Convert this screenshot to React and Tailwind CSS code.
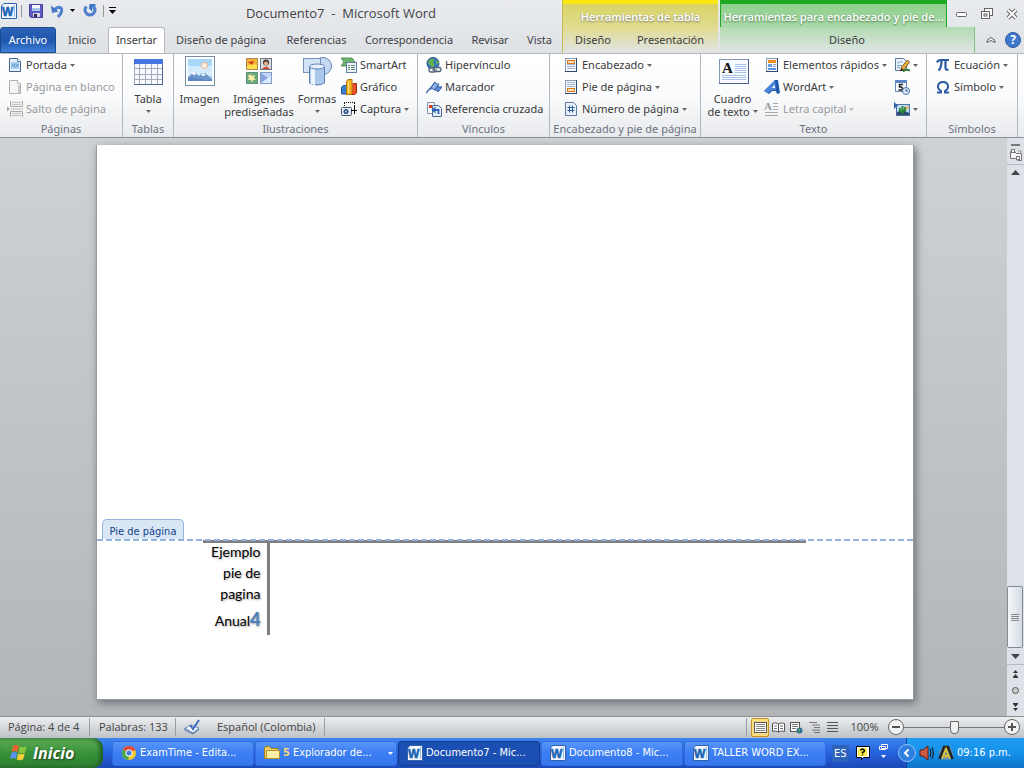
import React, { useState } from 'react'

const Caret = ({ className = 'fill-[#666]' }) => (
    <svg width="5" height="3" viewBox="0 0 5 3" className={`shrink-0 ${className}`}>
        <path d="M0 0h5L2.5 3z" />
    </svg>
)

const Icon = ({ size = 16, children, className = '' }) => (
    <svg width={size} height={size} viewBox={`0 0 ${size} ${size}`} className={`shrink-0 ${className}`} aria-hidden="true">
        {children}
    </svg>
)

const WordIcon = () => (
    <Icon>
        <path d="M3 .5h12.5v15H.5V3z" fill="#f3f8fe" stroke="#2f62a8" />
        <path d="M13.500 2v12" stroke="#9dbde6" />
        <text x="1" y="12.5" fontSize="12" fontWeight="bold" fontFamily="Liberation Sans, sans-serif" fill="#1d66b5" stroke="#1d66b5" strokeWidth=".6">W</text>
    </Icon>
)

const SaveIcon = () => (
    <Icon>
        <path d="M1.5 1.5h13v13H3l-1.5-1.5z" fill="#5d5abf" stroke="#45429c" />
        <path d="M4 2h8v6H4z" fill="#f4f7fd" />
        <path d="M4 5h8v3H4z" fill="#a5c4ee" />
        <path d="M5 10h7v4H5z" fill="#d3d6e0" />
        <path d="M6 11h3v3H6z" fill="#2c2a50" />
    </Icon>
)

const UndoIcon = () => (
    <Icon>
        <path d="M4.5 6.5Q8 3 11 5q2.500 3-3 9" fill="none" stroke="#4f80cd" strokeWidth="3" />
        <path d="M1 2.500l1 7.500 6.500-1.500z" fill="#4577c7" />
    </Icon>
)

const RedoIcon = () => (
    <Icon>
        <path d="M4.500 3.500Q1.500 7 4.500 10.500q3.500 3 7 0 3-4 0-6.500" fill="none" stroke="#4f80cd" strokeWidth="3" />
        <path d="M7.500 1h6v2l-3 1.500-.5 4-3-3z" fill="#3f73c6" />
    </Icon>
)

const Sheet = ({ fill = '#f4f8fd', stroke = '#5b7699' }) => (
    <path d="M2.5 1.5h8l3 3v10h-11z" fill={fill} stroke={stroke} />
)

const CoverIcon = () => (
    <Icon>
        <Sheet fill="#e6f1fb" stroke="#3f648f" />
        <rect x="4" y="5" width="8" height="7" fill="#a5cdf0" />
        <path d="M10.5 1.5v3h3" fill="#fff" stroke="#3f648f" strokeWidth=".8" />
        <path d="M4.500 7l2 1.500 2-1.500 2 1.500L12 7M4.500 10l2-1.500 2 1.500 2-1.500L12 10" fill="none" stroke="#4e8bc9" strokeWidth=".8" />
    </Icon>
)

const BlankIcon = () => (
    <Icon>
        <Sheet fill="#f5f5f5" stroke="#b0b0b0" />
        <path d="M10.5 1.5v3h3" fill="#fff" stroke="#a8a8a8" strokeWidth=".8" />
        <path d="M12 6v8" stroke="#ccc" strokeWidth="2" />
    </Icon>
)

const BreakIcon = () => (
    <Icon>
        <path d="M0 5.500L3 8 0 10.500z" fill="#aaa" />
        <path d="M3.5 0v5.5h12V0M3.5 16v-5.5h12V16" fill="#efefef" stroke="#aaa" />
        <path d="M5 1.500h9M5 3.500h9M5 12.500h9M5 14.500h9" stroke="#c4c4c4" />
        <path d="M4 8h12" stroke="#bbb" />
    </Icon>
)

const TableIcon = () => (
    <Icon size={32}>
        <rect x="2" y="3" width="29" height="26" fill="#f7f9fc" />
        <rect x="2" y="3" width="29" height="5" fill="#4575dd" />
        <path d="M2.5 8v20M7.5 8v20M13.5 8v20M19.5 8v20M25.500 8v20M30.5 8v20M2 12.500h29M2 18.500h29M2 23.500h29M2 28.500h29" stroke="#a3adbf" />
        <path d="M2 28.500h29M30.500 8v20" stroke="#4f6995" />
    </Icon>
)

const PictureIcon = () => (
    <Icon size={32}>
        <rect x="1.5" y=".5" width="29" height="29" fill="#fdfeff" stroke="#7b8da2" />
        <rect x="4" y="3" width="24" height="21" fill="#a9d7fb" />
        <path d="M4 10h24v10H4z" fill="#d3ecfd" />
        <circle cx="20.5" cy="9.5" r="3" fill="#fdf3ea" stroke="#f2a878" />
        <path d="M4 22l6-7 5 5 3-3 3 0 7 6H4z" fill="#6b95cb" />
        <path d="M7 18l3-3 3 4-2-1-1 2-1-2zM17 19l2-2 3 2-3 1z" fill="#fff" />
        <path d="M4 21q12 3 24 2v2H4z" fill="#5c86c4" />
    </Icon>
)

const ClipArtIcon = () => (
    <Icon size={32}>
        <rect x="3.5" y="2.5" width="11" height="11" fill="#f9b233" stroke="#a98a50" />
        <path d="M4 10l5-2 5 1v4H4z" fill="#ffdf4a" />
        <path d="M5 6l6-1-2 4z" fill="#c53a1c" />
        <rect x="17.5" y="2.5" width="11" height="11" fill="#d9dce3" stroke="#6c7480" />
        <circle cx="23" cy="6.500" r="3" fill="#4a352b" />
        <circle cx="23" cy="7.500" r="2" fill="#e8b68e" />
        <path d="M19 13q4-5 8 0z" fill="#d5492c" />
        <rect x="3.5" y="16.5" width="11" height="11" fill="#6dab79" stroke="#5f8f80" />
        <path d="M5 19l2 0 1-1 1 2 3-1-1 3 2 2-3 0-1 3-1-3-3 0 1-2z" fill="#f5eca5" />
        <rect x="17.5" y="16.5" width="11" height="11" fill="#c3d9f6" stroke="#7f9cc8" />
        <path d="M18 17l7 5-7 5z" fill="#8ba4dd" />
        <path d="M18 27l10-7v7z" fill="#dbe9fb" />
    </Icon>
)

const ShapesIcon = () => (
    <Icon size={32}>
        <circle cx="22" cy="10" r="8.5" fill="#c5d9f2" stroke="#6887b5" />
        <rect x="2.5" y="2.5" width="17" height="14" fill="#d3e4f7" stroke="#7491bb" />
        <path d="M8.5 11v16q7.500 4 15 0V11z" fill="#abc7ec" stroke="#5f80b3" />
        <path d="M11 12v16M13 12v17" stroke="#edf5ff" strokeWidth="2" />
        <ellipse cx="16" cy="10.5" rx="7.500" ry="2.5" fill="#e9f2fc" stroke="#5f80b3" />
    </Icon>
)

const SmartArtIcon = () => (
    <Icon>
        <path d="M0 1h11l3 4-3 4H0l3-4z" fill="#6fb269" stroke="#3f8644" strokeWidth=".8" />
        <rect x="5.5" y="5.5" width="10" height="10" fill="#eef3fa" stroke="#627ea7" />
        <path d="M7 8.500h2M10 8.500h4M7 10.500h2M10 10.500h4M7 12.500h2M10 12.500h4" stroke="#5f8a6c" />
    </Icon>
)

const ChartIcon = () => (
    <Icon>
        <path d="M.5 8l2-1.500h3V15h-5z" fill="#3a7fd0" stroke="#1d579f" />
        <path d="M10.5 6L12 4.500h3.500V14l-2 1.500h-3z" fill="#f0512b" stroke="#a12a12" />
        <path d="M5.5 2.500L7 .5h4v14l-1 1H5.500z" fill="#f7b526" stroke="#b07708" />
        <path d="M7.500 3v11" stroke="#ffe07a" />
    </Icon>
)

const CameraIcon = () => (
    <Icon>
        <path d="M3 1.5h11M3.500 2v4M13.500 2v3" stroke="#111" strokeDasharray="1 1" fill="none" />
        <rect x=".5" y="6.500" width="10" height="8" rx="1" fill="#e3ebf5" stroke="#47566b" />
        <circle cx="5" cy="10.500" r="2.5" fill="#2e4f7b" />
        <circle cx="5" cy="10.500" r="1" fill="#b4d0f1" />
        <path d="M13.500 5v8M10 9.500h6" stroke="#000" />
    </Icon>
)

const LinkIcon = () => (
    <Icon>
        <circle cx="7" cy="6.5" r="6" fill="#3474c9" stroke="#26528c" />
        <path d="M3 3q4-3 6 0l-2 2 2 3-3 3-2-3-2-1z" fill="#63b04c" />
        <path d="M10 3l3 2-1 3-2-2z" fill="#63b04c" />
        <rect x="3" y="11" width="7" height="4" rx="2" fill="#f2f4f8" stroke="#546377" strokeWidth="1.3" />
        <rect x="8" y="10.5" width="7" height="4" rx="2" fill="#f2f4f8" stroke="#546377" strokeWidth="1.3" />
        <path d="M6 13h5" stroke="#546377" />
    </Icon>
)

const BookmarkIcon = () => (
    <Icon>
        <path d="M0 14L9 4" stroke="#4069ad" strokeWidth="1.5" />
        <path d="M4 10l5-7q1 3 4 2l-4 6q-3-2-5-1z" fill="#8db1e6" stroke="#315da6" />
        <path d="M9 11l3-4q1 1 4 1l-4 5q-1-2-3-2z" fill="#5f8fd6" stroke="#315da6" />
    </Icon>
)

const CrossRefIcon = () => (
    <Icon>
        <path d="M1.5 1.5h7v11h-7z" fill="#fff" stroke="#8295b0" />
        <path d="M3 4h3v3H3z" fill="#e0391c" />
        <path d="M6.500 4.500h6l3 3v8h-9z" fill="#e5effa" stroke="#4a6890" />
        <path d="M12.500 13V9H8" fill="none" stroke="#2b62b3" strokeWidth="1.8" />
        <path d="M5.500 9L9.500 5.500v7z" fill="#2b62b3" />
    </Icon>
)

const PageBand = ({ y }) => (
    <Icon>
        <rect x="2.500" y="1.5" width="11" height="13" fill="#f6f9fd" stroke="#8d9cb3" />
        <path d="M2 14.500h12M13.500 1v14" stroke="#2f4a70" />
        <path d="M4 3.500h8M4 5.500h8M4 7.500h8M4 9.500h8M4 11.500h8" stroke="#9db2d0" />
        <rect x="4.500" y={y} width="7" height="3" fill="#fde0b0" stroke="#d9781a" />
    </Icon>
)

const PageNumberIcon = () => (
    <Icon>
        <Sheet fill="#eaf2fb" stroke="#5d779c" />
        <path d="M6.500 4.500v7M9.500 4.500v7M4.500 6.500h7M4.500 9.500h7" stroke="#30599c" />
    </Icon>
)

const TextBoxIcon = () => (
    <Icon size={32}>
        <rect x="2.5" y="3.500" width="29" height="24" fill="#f7fafe" stroke="#8297b8" />
        <path d="M2 27.500h30M31.500 3v25" stroke="#46618c" />
        <path d="M18 8.500h11M18 10.500h11M18 12.500h11M18 14.500h11M18 16.500h11M5 19.500h24M5 21.500h24M5 23.500h24" stroke="#a9c2ea" />
        <text x="5" y="17" fontSize="15" fontWeight="bold" fontFamily="Liberation Serif, serif" fill="#111">A</text>
    </Icon>
)

const QuickPartsIcon = () => (
    <Icon>
        <rect x="2.500" y="1.5" width="11" height="13" fill="#f6f9fd" stroke="#8d9cb3" />
        <path d="M2 14.500h12M13.500 1v14" stroke="#2f4a70" />
        <rect x="4" y="3" width="8" height="3" fill="#f08a24" />
        <rect x="4" y="7" width="4" height="3" fill="#6ba1df" />
        <path d="M9 7.500h3M9 9.500h3" stroke="#8fa5c4" />
        <rect x="4" y="11" width="8" height="2" fill="#5a91d6" />
    </Icon>
)

const WordArtIcon = () => (
    <Icon>
        <path d="M0 12L11 1h3l2 13-3 1-1-3H8l-3 3z" fill="#1e56ad" />
        <path d="M0 12L11 1l1 10H8l-4 3z" fill="#4a86d8" />
        <path d="M8 9l2.500-3.500L11 9z" fill="#fff" />
    </Icon>
)

const DropCapIcon = () => (
    <Icon>
        <text x="0" y="9" fontSize="11" fontWeight="bold" fontFamily="Liberation Serif, serif" fill="#999">A</text>
        <path d="M9 2.500h5M9 5.500h5M9 8.500h5M1 11.500h13M1 14.500h13" stroke="#aaa" />
    </Icon>
)

const SignatureIcon = () => (
    <Icon>
        <path d="M1.5 1.5h8l3 3v9h-11z" fill="#eaf2fb" stroke="#5c7596" />
        <path d="M3 5q2 2 3 0t3 1M3 8.500h5M3 10.500h3" stroke="#78a0cf" fill="none" />
        <path d="M15.500 5l-2-2-6 7-1 4 4-2z" fill="#f0ad38" stroke="#5d4517" strokeWidth=".8" />
        <path d="M6.500 14l1-3 2 2z" fill="#222" />
        <path d="M9 14.500q3-3 7-1" stroke="#2f7a2e" strokeWidth="2" fill="none" />
    </Icon>
)

const DateIcon = () => (
    <Icon>
        <path d="M1.5 2.500h11v10h-11z" fill="#f6f9fd" stroke="#6b8bb8" />
        <path d="M1 1h12v3H1z" fill="#5b85c4" />
        <path d="M9 5.500H5.500v2.500h2q2 1.500 0 3H4.500" fill="none" stroke="#222" strokeWidth="1.500" />
        <circle cx="12" cy="12" r="3.5" fill="#dceafa" stroke="#5073a4" />
        <path d="M12 10v2h2" fill="none" stroke="#395782" />
    </Icon>
)

const ObjectIcon = () => (
    <Icon>
        <rect x="2.500" y="3.5" width="13" height="11" fill="#b9daf7" stroke="#50709d" />
        <path d="M3 11q6-3 12 1v2H3z" fill="#2d4a70" />
        <path d="M0 1l4 3.500L0 8z" fill="#2e64ad" />
        <path d="M8.500 13V5M6 7v3h2.500M11 6v3.500H8.500" stroke="#2b8a35" strokeWidth="2" fill="none" />
        <circle cx="13" cy="6.500" r="1.5" fill="#f2a94d" />
    </Icon>
)

const PiIcon = () => (
    <Icon>
        <path d="M2 5.500Q3 3 5.500 3H14M6.500 3.500Q6.500 11 3.500 13.500M10.500 3.500v7q0 3 3 2" fill="none" stroke="#2b5ba3" strokeWidth="2.200" />
    </Icon>
)

const OmegaIcon = () => (
    <Icon>
        <path d="M2 13.500h4V12Q2.500 10 3 6.500 4 3 8 3t5 3.500Q13.500 10 10 12v1.500h4" fill="none" stroke="#2b5ba3" strokeWidth="2" />
    </Icon>
)

const ChromeIcon = () => (
    <Icon>
        <circle cx="8" cy="8" r="7" fill="#f4ca32" />
        <path d="M8 8L1.900 4.500A7 7 0 0 1 14.300 5z" fill="#e04a3a" />
        <path d="M8 8L1.900 4.500A7 7 0 0 0 7.500 15z" fill="#4aa94f" />
        <circle cx="8" cy="8" r="3.500" fill="#fff" />
        <circle cx="8" cy="8" r="2.500" fill="#3f7fd8" />
    </Icon>
)

const FolderIcon = () => (
    <Icon>
        <path d="M.5 3.500l1-2h4l1.500 2h7v10H.5z" fill="#f3cf5e" stroke="#a1801f" />
        <path d="M2.5 5.500h13v8h-13z" fill="#fdf0a4" stroke="#b3902a" />
    </Icon>
)

const WindowsFlag = () => (
    <Icon size={20}>
        <path d="M4 3q3-2 6 0L8.500 9q-3-2-6 0z" fill="#ea6434" />
        <path d="M11 3.500q3 1.500 6.500 0L16 9.500q-3 1.500-6.500 0z" fill="#8cc63e" />
        <path d="M2.300 10q3-2 6 0L7 16q-3-2-6 0z" fill="#5b93ec" />
        <path d="M9.300 10.500q3 1.500 6.500 0L14 16.500q-3 1.500-6.300 0z" fill="#f7cf3c" />
    </Icon>
)

const SmallButton = ({ icon, label, name, caret, disabled }) => (
    <button
        disabled={disabled}
        aria-label={name}
        className={`flex h-[22px] items-center gap-[3px] whitespace-nowrap ${disabled ? 'text-[#9a9a9a]' : 'text-[#3b3b3b]'}`}
    >
        {icon}
        {label && <span>{label}</span>}
        {caret && <Caret className={disabled ? 'fill-[#bbb]' : 'fill-[#666]'} />}
    </button>
)

const BigButton = ({ icon, lines, className, caret, inlineCaret }) => (
    <button className={`flex flex-col items-center pt-[2px] leading-[13px] whitespace-nowrap text-[#3b3b3b] ${className}`}>
        {icon}
        <span className="mt-[4px] block">{lines[0]}</span>
        {lines[1] && (
            <span className="flex items-center gap-[3px]">
                {lines[1]}
                {inlineCaret && <Caret />}
            </span>
        )}
        {caret && <Caret className="mt-[5px] fill-[#666]" />}
    </button>
)

const Group = ({ title, className, children }) => (
    <section className={`flex shrink-0 flex-col border-r border-[#b4b8be] ${className}`}>
        <div className="flex h-[66px]">{children}</div>
        <h2 className="h-[17px] text-center leading-[17px] whitespace-nowrap text-[#6c7280]">{title}</h2>
    </section>
)

const TABS = [
    { label: 'Inicio', width: 'w-[52px]' },
    { label: 'Insertar', width: 'w-[57px]' },
    { label: 'Diseño de página', width: 'w-[112px]' },
    { label: 'Referencias', width: 'w-[79px]' },
    { label: 'Correspondencia', width: 'w-[106px]' },
    { label: 'Revisar', width: 'w-[56px]' },
    { label: 'Vista', width: 'w-[43px]' }
]

const TASKS = [
    { label: 'ExamTime - Edita...', icon: <ChromeIcon /> },
    { label: 'Explorador de...', icon: <FolderIcon />, count: 5 },
    { label: 'Documento7 - Mic...', icon: <WordIcon />, active: true },
    { label: 'Documento8 - Mic...', icon: <WordIcon /> },
    { label: 'TALLER WORD EX...', icon: <WordIcon /> }
]

const Header = ({ tab, setTab }) => (
    <header className="flex h-[54px] border-b border-[#b5b9be] bg-linear-to-b from-[#e9ebee] to-[#dfe2e5]">
        <div className="flex flex-1 flex-col">
            <div className="flex h-[28px] items-center">
                <div className="flex w-[120px] items-center pb-[6px] pl-px">
                    <WordIcon />
                    <span className="mx-1 h-3 w-px bg-[#999]" />
                    <button aria-label="Guardar" className="ml-[2px]"><SaveIcon /></button>
                    <button aria-label="Deshacer" className="ml-[6px] flex items-center gap-[4px]">
                        <UndoIcon />
                        <Caret className="fill-black" />
                    </button>
                    <button aria-label="Rehacer" className="ml-[7px]"><RedoIcon /></button>
                    <span className="mx-[5px] h-3 w-px shrink-0 bg-[#999]" />
                    <button aria-label="Personalizar barra" className="shrink-0">
                        <svg width="7" height="7" viewBox="0 0 7 7"><path d="M0 0h7v1H0zM0 3h7L3.500 7z" /></svg>
                    </button>
                </div>
                <h1 className="flex-1 font-['Open_Sans',sans-serif] text-center text-[13px] whitespace-pre text-[#444]">Documento7  -  Microsoft Word</h1>
            </div>
            <nav className="flex h-[26px] items-stretch">
                <button className="w-[56px] rounded-t-[3px] border border-[#1c4a93] bg-linear-to-b from-[#2b62b8] via-[#1f55ab] to-[#3e7fd6] text-white">
                    Archivo
                </button>
                {TABS.map((t) => (
                    <button
                        key={t.label}
                        onClick={() => setTab(t.label)}
                        className={`${t.width} whitespace-nowrap ${
                            tab === t.label
                                ? 'rounded-t-[3px] border border-b-0 border-[#b5b9be] bg-white'
                                : 'text-[#3f4045]'
                        }`}
                    >
                        {t.label}
                    </button>
                ))}
            </nav>
        </div>

        {/* Table tools */}
        <div className="flex w-[156px] flex-col border-l border-[#c9b94a] bg-linear-to-b from-[#d8d15c] via-[#e0db8c] to-[#e1e4e6]">
            <div className="h-[28px] border-t-4 border-[#fbe712] pt-[5px] text-center font-['Open_Sans',sans-serif] font-semibold text-white [text-shadow:0_1px_2px_#777]">
                Herramientas de tabla
            </div>
            <div className="flex h-[25px]">
                <button className="w-[60px]">Diseño</button>
                <button className="flex-1">Presentación</button>
            </div>
        </div>

        {/* Header and footer tools */}
        <div className="ml-[2px] flex w-[304px] flex-col">
            <div className="flex h-[27px]">
                <div className="w-[227px] border-t-4 border-r border-l border-[#1fa824] bg-linear-to-b from-[#8fd08d] to-[#a9d8a8] pt-[5px] text-center font-['Open_Sans',sans-serif] font-semibold whitespace-nowrap text-white [text-shadow:0_1px_2px_#4c7a4c]">
                    Herramientas para encabezado y pie de...
                </div>
                <div className="flex flex-1 items-center justify-between pr-[6px] pl-[9px]">
                    <button aria-label="Minimizar">
                        <Icon size={12}><rect x=".5" y="4.500" width="10" height="4" rx="1" fill="#fff" stroke="#666" /></Icon>
                    </button>
                    <button aria-label="Restaurar">
                        <Icon size={12}>
                            <rect x="3.5" y=".5" width="8" height="7" fill="#fff" stroke="#666" />
                            <rect x=".5" y="3.500" width="8" height="7" fill="#fff" stroke="#666" />
                            <rect x="3" y="6" width="3" height="2" fill="#fff" stroke="#666" />
                        </Icon>
                    </button>
                    <button aria-label="Cerrar">
                        <Icon size={12}>
                            <path d="M2 2l8 8M10 2l-8 8" stroke="#666" strokeWidth="4" />
                            <path d="M2 2l8 8M10 2l-8 8" stroke="#fff" strokeWidth="2" />
                        </Icon>
                    </button>
                </div>
            </div>
            <div className="flex h-[26px]">
                <button className="w-[255px] border-r border-[#7cc47c] bg-linear-to-b from-[#b2dbb2] to-[#e1e4e6]">Diseño</button>
                <div className="flex flex-1 items-center justify-end gap-[9px] pr-[3px]">
                    <button aria-label="Contraer cinta">
                        <Icon size={10}><path d="M1 7.500V5.500l4-3 4 3v2l-4-2z" fill="#fff" stroke="#555" /></Icon>
                    </button>
                    <button aria-label="Ayuda" className="size-4 rounded-full border border-[#2c5aa5] bg-[#3f78cd] text-[12px] leading-[14px] font-bold text-white">
                        ?
                    </button>
                </div>
            </div>
        </div>
    </header>
)

const Ribbon = () => (
    <div className="flex h-[84px] border-b border-[#8c9096] bg-linear-to-b from-white via-[#fafbfc] to-[#e8eaed]">
        <Group title="Páginas" className="w-[123px]">
            <div className="pl-[7px]">
                <SmallButton icon={<CoverIcon />} label="Portada" caret />
                <SmallButton icon={<BlankIcon />} label="Página en blanco" disabled />
                <SmallButton icon={<BreakIcon />} label="Salto de página" disabled />
            </div>
        </Group>
        <Group title="Tablas" className="w-[51px]">
            <BigButton icon={<TableIcon />} lines={['Tabla']} caret className="w-full" />
        </Group>
        <Group title="Ilustraciones" className="w-[244px]">
            <BigButton icon={<PictureIcon />} lines={['Imagen']} className="w-[51px]" />
            <BigButton icon={<ClipArtIcon />} lines={['Imágenes', 'prediseñadas']} className="w-[68px]" />
            <BigButton icon={<ShapesIcon />} lines={['Formas']} caret className="w-[48px]" />
            <div>
                <SmallButton icon={<SmartArtIcon />} label="SmartArt" />
                <SmallButton icon={<ChartIcon />} label="Gráfico" />
                <SmallButton icon={<CameraIcon />} label="Captura" caret />
            </div>
        </Group>
        <Group title="Vínculos" className="w-[132px]">
            <div className="pl-[8px]">
                <SmallButton icon={<LinkIcon />} label="Hipervínculo" />
                <SmallButton icon={<BookmarkIcon />} label="Marcador" />
                <SmallButton icon={<CrossRefIcon />} label="Referencia cruzada" />
            </div>
        </Group>
        <Group title="Encabezado y pie de página" className="w-[151px]">
            <div className="pl-[13px]">
                <SmallButton icon={<PageBand y={3.5} />} label="Encabezado" caret />
                <SmallButton icon={<PageBand y={9.5} />} label="Pie de página" caret />
                <SmallButton icon={<PageNumberIcon />} label="Número de página" caret />
            </div>
        </Group>
        <Group title="Texto" className="w-[226px]">
            <BigButton icon={<TextBoxIcon />} lines={['Cuadro', 'de texto']} inlineCaret className="w-[63px]" />
            <div className="w-[130px]">
                <SmallButton icon={<QuickPartsIcon />} label="Elementos rápidos" caret />
                <SmallButton icon={<WordArtIcon />} label="WordArt" caret />
                <SmallButton icon={<DropCapIcon />} label="Letra capital" caret disabled />
            </div>
            <div>
                <SmallButton icon={<SignatureIcon />} name="Línea de firma" caret />
                <SmallButton icon={<DateIcon />} name="Fecha y hora" />
                <SmallButton icon={<ObjectIcon />} name="Objeto" caret />
            </div>
        </Group>
        <Group title="Símbolos" className="w-[91px]">
            <div className="pl-[8px]">
                <SmallButton icon={<PiIcon />} label="Ecuación" caret />
                <SmallButton icon={<OmegaIcon />} label="Símbolo" caret />
            </div>
        </Group>
    </div>
)

const ScrollBar = () => (
    <div className="flex w-[17px] flex-col items-center bg-[#dde1e8] pt-[6px]">
        <span className="h-[2px] w-[9px] bg-[#777]" />
        <button aria-label="Regla" className="mt-[3px]">
            <Icon size={12}>
                <path d="M.5 2.500h4l2 2h5v7h-4l-2-2h-5z" fill="#f5f5f5" stroke="#777" />
                <rect x="1.5" y=".5" width="3" height="3" fill="#fff" stroke="#777" />
                <rect x="6.5" y="7.500" width="3" height="3" fill="#fff" stroke="#777" />
                <path d="M8 2l3 0 0 2" fill="none" stroke="#999" />
            </Icon>
        </button>
        <span className="mt-[3px] h-px w-full bg-[#b5bac2]" />
        <button aria-label="Subir" className="mt-[5px]">
            <svg width="9" height="5" viewBox="0 0 9 5"><path d="M0 5h9L4.500 0z" fill="#444" /></svg>
        </button>
        <div className="flex w-full flex-1 flex-col justify-end">
            <div className="flex h-[62px] w-[16px] flex-col items-center justify-center gap-px rounded-[2px] border border-[#838b97] bg-linear-to-r from-[#f4f6f9] to-[#d5dbe5]">
                <span className="h-px w-2 bg-[#888]" />
                <span className="h-px w-2 bg-[#888]" />
                <span className="h-px w-2 bg-[#888]" />
                <span className="h-px w-2 bg-[#888]" />
            </div>
        </div>
        <button aria-label="Bajar" className="mt-[6px]">
            <svg width="9" height="5" viewBox="0 0 9 5"><path d="M0 0h9L4.500 5z" fill="#444" /></svg>
        </button>
        <span className="mt-[5px] h-px w-full bg-[#b5bac2]" />
        <div className="flex h-[51px] flex-col items-center justify-around">
            <button aria-label="Página anterior">
                <svg width="7" height="8" viewBox="0 0 7 8"><path d="M1 3h5L3.500 0zM1 7h5L3.500 4zM1 7h5v1H1z" fill="#333" /></svg>
            </button>
            <button aria-label="Seleccionar objeto" className="size-[7px] rounded-full border border-[#555] bg-[#ccc]" />
            <button aria-label="Página siguiente">
                <svg width="7" height="8" viewBox="0 0 7 8"><path d="M1 0h5v1H1zM1 1h5L3.500 4zM1 5h5L3.500 8z" fill="#333" /></svg>
            </button>
        </div>
    </div>
)

const DocumentArea = () => (
    <main className="flex flex-1 bg-linear-to-b from-[#ced2d6] to-[#b2b6b9]">
        <div className="flex flex-1 pt-[7px] pb-[16px] pl-[3px]">
            <article className="mx-auto flex w-[818px] flex-col justify-end border border-t-0 border-[#989ca1] bg-white shadow-[2px_3px_8px_#6b6f74]">
                <div className="pl-[5px]">
                    <span className="block h-[20px] w-[82px] rounded-t-[5px] border border-b-0 border-[#93b3dc] bg-[#d9e7f5] text-center font-['DejaVu_Sans_Condensed',sans-serif] text-[11px] leading-[23px] text-[#15428b]">
                        Pie de página
                    </span>
                </div>
                <footer className="h-[160px]">
                    <div className="relative z-10 h-[2px] bg-[repeating-linear-gradient(90deg,#93b3dc_0_6px,transparent_6px_9px)]" />
                    <table className="-mt-px ml-[106px] w-[603px] border-collapse border-t-3 border-[#7f7f7f] font-[Lato,sans-serif] text-[14px] leading-[21px] text-black">
                        <tbody>
                            <tr>
                                <td className="w-[65px] border-r-3 border-[#7f7f7f] pr-[6px] pb-[4px] text-right align-top [text-shadow:1px_1px_2px_#aaa]">
                                    <p className="-mt-[2px]">Ejemplo pie de pagina</p>
                                    <p className="mt-[5px]">
                                        Anual<span className="text-[18px] font-black text-[#4f81bd]">4</span>
                                    </p>
                                </td>
                                <td />
                            </tr>
                        </tbody>
                    </table>
                </footer>
            </article>
        </div>
        <ScrollBar />
    </main>
)

const ViewIcon = ({ kind }) => (
    <Icon size={13}>
        {kind === 'print' && <><rect x=".5" y="1.5" width="12" height="10" fill="#fff" stroke="#555" /><path d="M2 3.500h9M2 5.500h9M2 7.500h9M2 9.500h9" stroke="#888" /></>}
        {kind === 'read' && <><path d="M6.500 3q-3-2-6-.5v8q3-1.500 6 .5 3-2 6-.5v-8q-3-1.500-6 .5v8" fill="#fff" stroke="#555" /><path d="M2 5h3M2 7.500h3M8 5h3M8 7.500h3" stroke="#777" /></>}
        {kind === 'web' && <><rect x=".5" y="1.5" width="9" height="9" fill="#fff" stroke="#555" /><path d="M2 3.500h6M2 5.500h6M2 7.500h4" stroke="#777" /><circle cx="9.5" cy="9.500" r="3" fill="#2f6f96" /><path d="M8 8l2 0 0 2-1 1z" fill="#68ad5a" /></>}
        {kind === 'outline' && <path d="M1 1.500h8M4 4h8M6 6.500h6M4 9h8M6 11.500h6" stroke="#777" />}
        {kind === 'draft' && <path d="M1 1.500h11M1 4.500h11M1 7.500h11M1 10.500h11" stroke="#555" />}
    </Icon>
)

const VIEWS = [
    { kind: 'print', label: 'Diseño de impresión' },
    { kind: 'read', label: 'Lectura de pantalla completa' },
    { kind: 'web', label: 'Diseño web' },
    { kind: 'outline', label: 'Esquema' },
    { kind: 'draft', label: 'Borrador' }
]

const StatusBar = ({ zoom, setZoom }) => (
    <div className="flex h-[22px] items-center border-t border-[#8c9096] bg-linear-to-b from-[#eceef0] to-[#bfc2c6] pb-px font-['Open_Sans',sans-serif] text-[#444]">
        <span className="w-[90px] border-r border-[#9a9da2] pl-[8px] leading-[18px] whitespace-nowrap">Página: 4 de 4</span>
        <span className="w-[86px] border-r border-[#9a9da2] pl-[9px] leading-[18px] whitespace-nowrap">Palabras: 133</span>
        <button aria-label="Revisión" className="ml-[8px]">
            <Icon>
                <path d="M1 9l6-3 8 3-6 5z" fill="#f4f8fd" stroke="#6f8fc4" />
                <path d="M1 9v2l8 4 6-5" fill="none" stroke="#4a6ea8" />
                <path d="M6 6l3 4 6-9" fill="none" stroke="#3c6bc0" strokeWidth="2" />
            </Icon>
        </button>
        <span className="ml-[17px] border-r border-[#9a9da2] pr-[9px] leading-[18px] whitespace-nowrap">Español (Colombia)</span>
        <div className="ml-auto flex items-center border-l border-[#9a9da2] pl-[4px]">
            {VIEWS.map((v, i) => (
                <button
                    key={v.kind}
                    aria-label={v.label}
                    className={`flex h-[19px] w-[18px] items-center justify-center ${i === 0 ? 'rounded-[2px] border border-[#c69223] bg-[#fbdc83]' : ''}`}
                >
                    <ViewIcon kind={v.kind} />
                </button>
            ))}
        </div>
        <span className="w-[47px] text-center">{zoom}%</span>
        <button aria-label="Alejar" className="flex size-[16px] items-center justify-center rounded-full border border-[#666] bg-[#f2f3f4]">
            <span className="h-[2px] w-[8px] bg-[#555]" />
        </button>
        <input
            type="range"
            aria-label="Zoom"
            min="0"
            max="200"
            value={zoom}
            onChange={(e) => setZoom(Number(e.target.value))}
            className="h-[15px] w-[100px] appearance-none bg-[linear-gradient(#777,#777)] bg-[length:100%_1px] bg-center bg-no-repeat [&::-webkit-slider-thumb]:h-[13px] [&::-webkit-slider-thumb]:w-[9px] [&::-webkit-slider-thumb]:appearance-none [&::-webkit-slider-thumb]:rounded-b-[4px] [&::-webkit-slider-thumb]:border [&::-webkit-slider-thumb]:border-[#666] [&::-webkit-slider-thumb]:bg-[#eef0f2]"
        />
        <button aria-label="Acercar" className="mr-[4px] flex size-[16px] items-center justify-center rounded-full border border-[#666] bg-[#f2f3f4]">
            <svg width="8" height="8" viewBox="0 0 8 8"><path d="M4 0v8M0 4h8" stroke="#555" strokeWidth="2" /></svg>
        </button>
    </div>
)

const TaskBar = () => (
    <div className="flex h-[30px] bg-linear-to-b from-[#3d86ee] via-[#2661dd] to-[#1c49b8] font-['DejaVu_Sans_Condensed',sans-serif] text-[11px] text-white">
        <button className="flex w-[103px] items-center gap-[4px] rounded-r-[10px] bg-linear-to-b from-[#5eac56] via-[#37933a] to-[#2c7d2f] pl-[9px] font-['Open_Sans',sans-serif] text-[16px] font-bold italic shadow-[inset_-3px_0_4px_#1f5c23] [text-shadow:1px_1px_2px_#1a3d1a]">
            <WindowsFlag />
            Inicio
        </button>
        <div className="ml-[9px] flex flex-1 items-center gap-px">
            {TASKS.map((t) => (
                <button
                    key={t.label}
                    className={`flex h-[25px] max-w-[142px] flex-1 items-center gap-[3px] rounded-[3px] border pl-[8px] whitespace-nowrap ${
                        t.active
                            ? 'border-[#143c8e] bg-[#1c4fb3]'
                            : 'border-[#2f6ce0] bg-linear-to-b from-[#5795f8] via-[#3b7df2] to-[#3777ec]'
                    }`}
                >
                    {t.icon}
                    {t.count && <b className="text-[#ffd779]">{t.count}</b>}
                    <span>{t.label}</span>
                    {t.count && <Caret className="mr-[3px] ml-auto fill-white" />}
                </button>
            ))}
        </div>
        <div className="flex w-[74px] items-center gap-[7px]">
            <span className="bg-[#2f62bd] px-[2px] leading-[17px]">ES</span>
            <Icon size={14}>
                <path d="M.5.5h13v11h-6l-2 2v-2h-5z" fill="#fff" stroke="#000" />
                <rect x="2" y="2" width="9" height="8" fill="#ffec47" />
                <path d="M4.500 4.500q2-3 4 0 0 1.500-2 2v1M6.500 8.500v1" fill="none" stroke="#000" strokeWidth="1.5" />
            </Icon>
            <Icon size={14} className="mb-[4px]">
                <path d="M4.500.5h6v4h-6zM2.500 2.500h6v3h-6z" fill="#2661dd" stroke="#fff" />
                <path d="M4 11h5l-2.500 3z" fill="#fff" />
            </Icon>
        </div>
        <div className="flex w-[118px] items-center gap-[3px] border-l border-[#0d3f9b] bg-linear-to-b from-[#1f9cf0] via-[#1391ea] to-[#0f73c9]">
            <button aria-label="Mostrar iconos ocultos" className="-ml-[9px] size-[18px] shrink-0 rounded-full border border-[#8fc4f5] bg-[#2d7fe0]">
                <svg width="16" height="16" viewBox="0 0 16 16"><path d="M9.500 4.500L6 8l3.500 3.500" fill="none" stroke="#fff" strokeWidth="2" /></svg>
            </button>
            <Icon>
                <path d="M1 5h3l5-4v14l-5-4H1z" fill="#cf5a44" stroke="#64190d" />
                <path d="M11 4q2 4 0 8M13 2q3 6 0 12" fill="none" stroke="#111" />
            </Icon>
            <Icon>
                <circle cx="8" cy="8" r="7" fill="#5f8fb8" />
                <path d="M1.500 14L6 2h4l4.500 12" fill="none" stroke="#222" strokeWidth="2.500" />
                <path d="M4 14l4-10 4 10M5.500 9L8 12l2.500-3" fill="none" stroke="#e0c430" strokeWidth="1.800" />
            </Icon>
            <time className="whitespace-nowrap">09:16 p.m.</time>
        </div>
    </div>
)

const App = () => {
    const [tab, setTab] = useState('Insertar')
    const [zoom, setZoom] = useState(100)

    return (
        <div className="flex min-h-screen flex-col font-['Noto_Sans',sans-serif] text-[11px] text-[#3b3b3b]">
            <Header tab={tab} setTab={setTab} />
            <Ribbon />
            <DocumentArea />
            <StatusBar zoom={zoom} setZoom={setZoom} />
            <TaskBar />
        </div>
    )
}

export default App
